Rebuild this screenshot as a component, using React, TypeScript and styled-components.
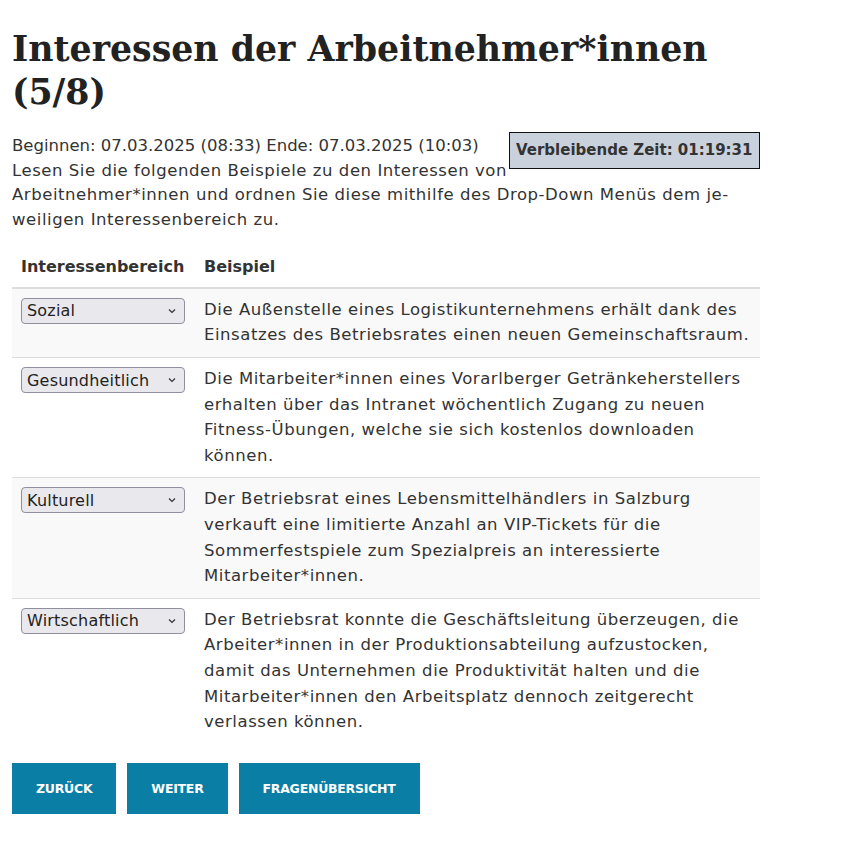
import styled, { createGlobalStyle } from 'styled-components';

const GlobalStyle = createGlobalStyle`
  html, body {
    margin: 0;
    padding: 0;
    background: #fff;
  }
  body {
    font-family: 'DejaVu Sans', 'Liberation Sans', sans-serif;
    font-size: 16.5px;
    letter-spacing: 0.55px;
    color: #333;
  }
`;

const chevron =
  "data:image/svg+xml;utf8,<svg xmlns='http://www.w3.org/2000/svg' width='8' height='6' viewBox='0 0 8 6'><path d='M1 1.5 L4 4.5 L7 1.5' fill='none' stroke='%23333' stroke-width='1.2'/></svg>";

const Page = styled.div`
  width: 748px;
  padding: 27px 0 0 12px;
`;

const Title = styled.h1`
  margin: 0 0 21px;
  font-family: 'DejaVu Serif', 'Liberation Serif', serif;
  font-size: 34.75px;
  line-height: 43px;
  font-weight: bold;
  letter-spacing: 0;
  color: #222;
`;

const Intro = styled.div`
  line-height: 24.7px;
  margin-bottom: 13px;
`;

const Timer = styled.div`
  float: right;
  margin-top: -2px;
  width: 237px;
  padding: 0 6px;
  height: 35px;
  line-height: 35px;
  background: #c9d1dd;
  border: 1px solid #111;
  font-weight: bold;
  font-size: 15px;
  letter-spacing: 0;
  color: #333;
`;

const Table = styled.table`
  width: 100%;
  border-collapse: collapse;
`;

const HeadCell = styled.th`
  text-align: left;
  padding: 8px 9px;
  line-height: 25px;
  font-size: 16px;
  letter-spacing: 0;
  font-weight: bold;
  border-bottom: 2px solid #ddd;
  white-space: nowrap;
`;

const Row = styled.tr<{ $striped: boolean }>`
  background: ${(p) => (p.$striped ? '#f9f9f9' : '#fff')};
  border-top: 1px solid #ddd;
`;

const Cell = styled.td`
  vertical-align: top;
  padding: 8px 9px 9px;
  line-height: 25.6px;
`;

const LastCell = styled(Cell)`
  padding-bottom: 7px;
`;

const SelectCell = styled(Cell)`
  width: 165px;
`;

const Select = styled.select`
  appearance: none;
  width: 164px;
  height: 26px;
  margin-top: 1px;
  font-family: 'DejaVu Sans', sans-serif;
  font-size: 16px;
  letter-spacing: 0.2px;
  color: #222;
  background: #e9e9ed url("${chevron}") no-repeat right 8px center;
  border: 1px solid #8f8f9d;
  border-radius: 4px;
  padding: 0 20px 0 5px;
`;

const Line = styled.span<{ $tight?: boolean }>`
  display: block;
  white-space: nowrap;
  letter-spacing: ${(p) => (p.$tight ? '0' : 'inherit')};
`;

const Buttons = styled.div`
  display: flex;
  gap: 11px;
  margin-top: 21px;
`;

const Button = styled.button`
  height: 51px;
  padding: 0 24px;
  border: none;
  background: #0a7ea5;
  color: #fff;
  font-family: 'DejaVu Sans', sans-serif;
  font-weight: bold;
  font-size: 12.5px;
  text-transform: uppercase;
  letter-spacing: -0.25px;
`;

const rows = [
  {
    value: 'Sozial',
    lines: [
      'Die Außenstelle eines Logistikunternehmens erhält dank des',
      'Einsatzes des Betriebsrates einen neuen Gemeinschaftsraum.',
    ],
  },
  {
    value: 'Gesundheitlich',
    lines: [
      'Die Mitarbeiter*innen eines Vorarlberger Getränkeherstellers',
      'erhalten über das Intranet wöchentlich Zugang zu neuen',
      'Fitness-Übungen, welche sie sich kostenlos downloaden',
      'können.',
    ],
  },
  {
    value: 'Kulturell',
    lines: [
      'Der Betriebsrat eines Lebensmittelhändlers in Salzburg',
      'verkauft eine limitierte Anzahl an VIP-Tickets für die',
      'Sommerfestspiele zum Spezialpreis an interessierte',
      'Mitarbeiter*innen.',
    ],
  },
  {
    value: 'Wirtschaftlich',
    lines: [
      'Der Betriebsrat konnte die Geschäftsleitung überzeugen, die',
      'Arbeiter*innen in der Produktionsabteilung aufzustocken,',
      'damit das Unternehmen die Produktivität halten und die',
      'Mitarbeiter*innen den Arbeitsplatz dennoch zeitgerecht',
      'verlassen können.',
    ],
  },
];

const options = ['Sozial', 'Gesundheitlich', 'Kulturell', 'Wirtschaftlich'];

function App() {
  return (
    <>
      <GlobalStyle />
      <Page>
        <Title>
          Interessen der Arbeitnehmer*innen
          <br />
          (5/8)
        </Title>
        <Intro>
          <Timer>Verbleibende Zeit: 01:19:31</Timer>
          <Line $tight>Beginnen: 07.03.2025 (08:33) Ende: 07.03.2025 (10:03)</Line>
          <Line>Lesen Sie die folgenden Beispiele zu den Interessen von</Line>
          <Line>Arbeitnehmer*innen und ordnen Sie diese mithilfe des Drop-Down Menüs dem je-</Line>
          <Line>weiligen Interessenbereich zu.</Line>
        </Intro>
        <Table>
          <thead>
            <tr>
              <HeadCell>Interessenbereich</HeadCell>
              <HeadCell>Beispiel</HeadCell>
            </tr>
          </thead>
          <tbody>
            {rows.map((row, i) => {
              const TextCell = i === rows.length - 1 ? LastCell : Cell;
              return (
                <Row key={row.value} $striped={i % 2 === 0}>
                  <SelectCell>
                    <Select defaultValue={row.value}>
                      {options.map((o) => (
                        <option key={o}>{o}</option>
                      ))}
                    </Select>
                  </SelectCell>
                  <TextCell>
                    {row.lines.map((l) => (
                      <Line key={l}>{l}</Line>
                    ))}
                  </TextCell>
                </Row>
              );
            })}
          </tbody>
        </Table>
        <Buttons>
          <Button>Zurück</Button>
          <Button>Weiter</Button>
          <Button>Fragenübersicht</Button>
        </Buttons>
      </Page>
    </>
  );
}

export default App;
